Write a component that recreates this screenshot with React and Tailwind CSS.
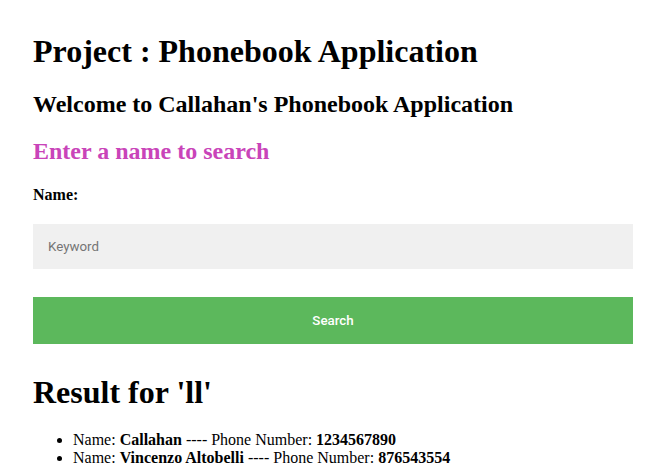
import { useState } from "react";

const results = [
  { name: "Callahan", phone: "1234567890" },
  { name: "Vincenzo Altobelli", phone: "876543554" },
];

export default function App() {
  const [keyword, setKeyword] = useState("");

  return (
    <div className="min-h-screen bg-white px-[33px] pt-[33px] text-black font-['Liberation_Serif',serif]">
      <h1 className="text-[32px] leading-[37px] font-bold">Project : Phonebook Application</h1>
      <h2 className="mt-[20px] text-[24px] leading-[28px] font-bold">
        Welcome to Callahan's Phonebook Application
      </h2>
      <h3 className="mt-[19px] text-[24px] leading-[28px] font-bold text-[#c944b9]">
        Enter a name to search
      </h3>

      <form onSubmit={(e) => e.preventDefault()}>
        <label className="mt-[21px] block text-[16px] leading-[18px] font-bold">Name:</label>
        <input
          className="mt-[20px] block h-[45px] w-[600px] bg-[#f0f0f0] px-[15px] text-[13.33px] font-['Roboto',sans-serif] outline-none placeholder:text-[#757575]"
          placeholder="Keyword"
          value={keyword}
          onChange={(e) => setKeyword(e.target.value)}
        />
        <button className="mt-[28px] block h-[47px] w-[600px] bg-[#5cb85c] text-[13.33px] font-medium text-white font-['Roboto',sans-serif]">
          Search
        </button>
      </form>

      <h1 className="mt-[30px] text-[32px] leading-[37px] font-bold">Result for 'll'</h1>
      <ul className="mt-[20px] list-disc pl-[40px] text-[16px] leading-[18px]">
        {results.map((r) => (
          <li key={r.name}>
            Name: <b>{r.name}</b> ---- Phone Number: <b>{r.phone}</b>
          </li>
        ))}
      </ul>
    </div>
  );
}
